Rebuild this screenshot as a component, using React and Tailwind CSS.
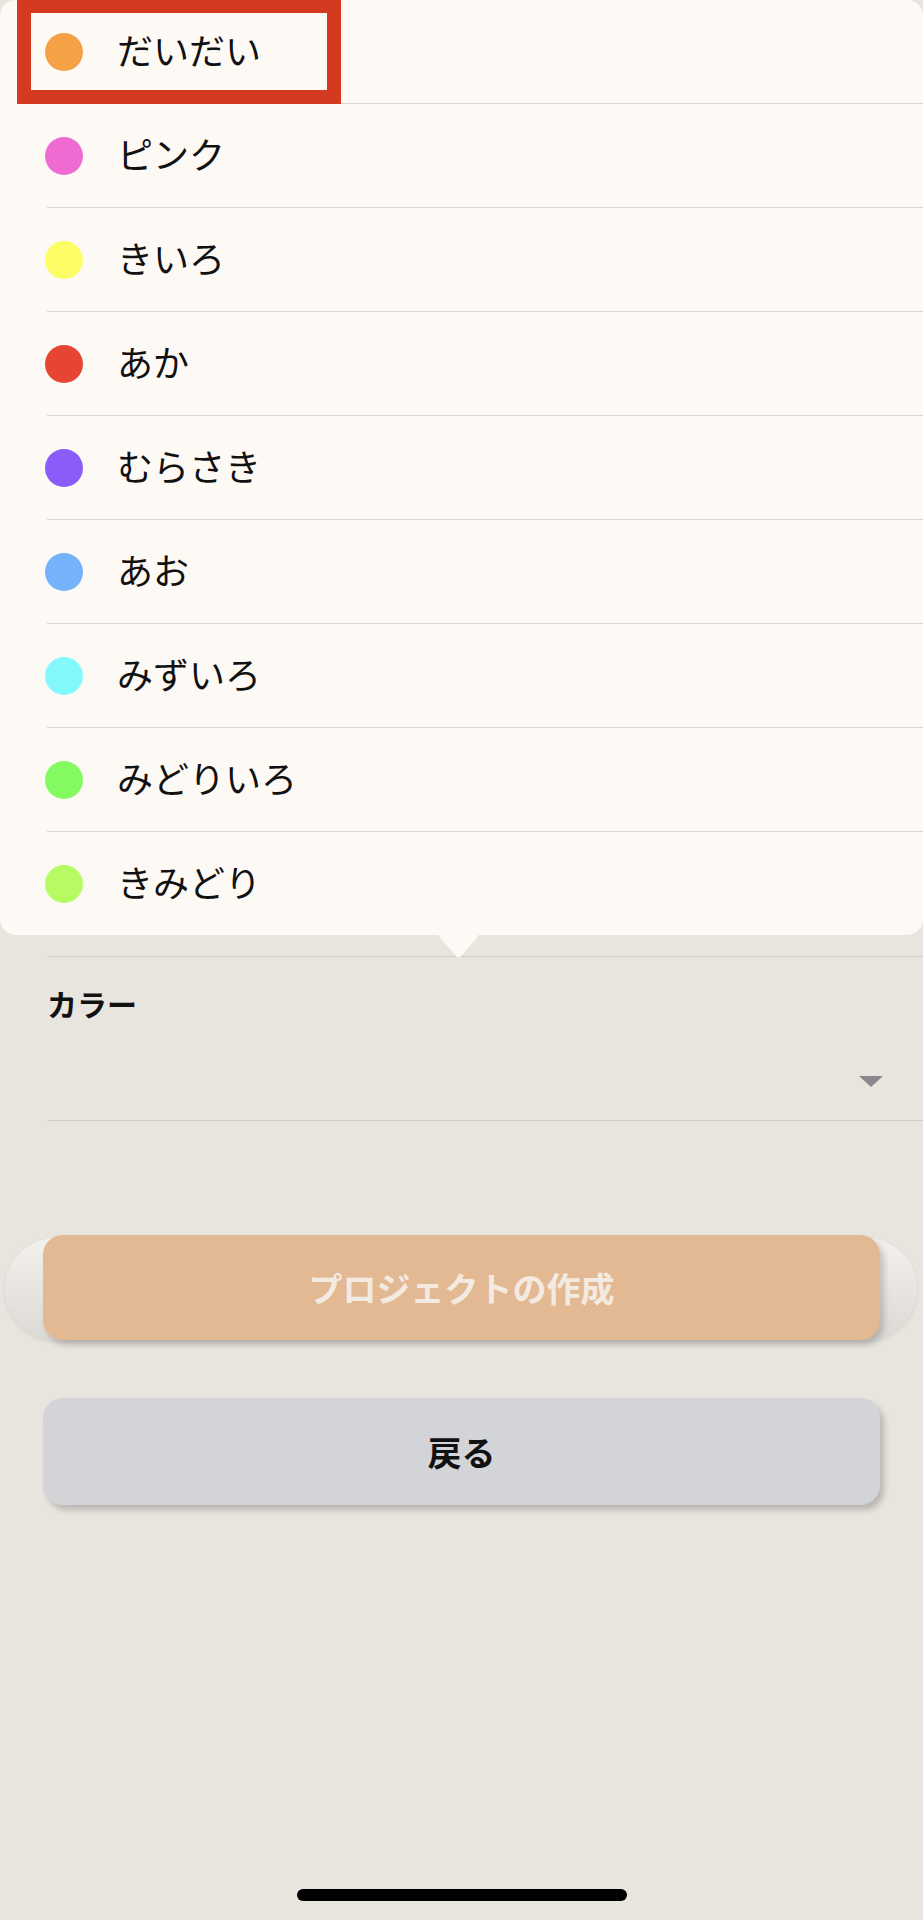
import React from "react";

const colors = [
  { name: "だいだい", c: "bg-[#f4a245]" },
  { name: "ピンク", c: "bg-[#f06bd1]" },
  { name: "きいろ", c: "bg-[#fdfe66]" },
  { name: "あか", c: "bg-[#e64533]" },
  { name: "むらさき", c: "bg-[#8b5cf9]" },
  { name: "あお", c: "bg-[#74b3fb]" },
  { name: "みずいろ", c: "bg-[#83f9fe]" },
  { name: "みどりいろ", c: "bg-[#83fb60]" },
  { name: "きみどり", c: "bg-[#b6fb63]" },
];

export default function App() {
  return (
    <div
      className="relative w-full h-[1920px] overflow-hidden bg-[#e8e4de] text-[#111]"
      style={{ fontFamily: '"Noto Sans CJK JP", "Noto Sans", sans-serif' }}
    >
      {/* underlying form */}
      <div className="pl-[47px]">
        <div className="h-[957px] border-b border-[#d0ccc7]" />
        <div className="pt-[29px] h-[65px]">
          <div className="text-[30px] leading-[34px] font-bold">カラー</div>
        </div>
        <div className="h-[99px] border-b border-[#d0ccc7] flex items-end justify-end pr-[40px] pb-[33px]">
          <svg width="24" height="11" viewBox="0 0 24 11">
            <path d="M0 0 H24 L12 11 Z" fill="#8e868e" />
          </svg>
        </div>
      </div>

      <div className="mt-[114px] relative px-[43px]">
        <div className="absolute left-[5px] right-[6px] top-[3px] h-[102px] rounded-full bg-gradient-to-b from-[#f3f1ef] to-[#dcd9d5] shadow-[0_2px_4px_rgba(0,0,0,0.08)]" />
        <button className="relative w-full h-[105px] rounded-[20px] bg-[#e3b994] shadow-[4px_5px_6px_rgba(0,0,0,0.18)] text-[34px] font-bold text-[#f3ebe2] flex items-center justify-center">
          プロジェクトの作成
        </button>
      </div>

      <div className="mt-[58px] px-[43px]">
        <button className="w-full h-[107px] rounded-[20px] bg-[#d3d4d8] shadow-[4px_5px_6px_rgba(0,0,0,0.2)] text-[34px] font-bold text-[#111] flex items-center justify-center">
          戻る
        </button>
      </div>

      <div className="mt-[384px] flex justify-center">
        <div className="w-[330px] h-[12px] rounded-full bg-black" />
      </div>

      {/* popover menu */}
      <div className="absolute top-0 left-0 right-0">
        <div className="bg-[#fdf9f4] rounded-[16px] h-[935px] overflow-hidden">
          {colors.map((item) => (
            <div
              key={item.name}
              className="ml-[47px] h-[104px] border-b border-[#d9d5d0] flex items-center gap-[34px]"
            >
              <div className={`-ml-[2px] w-[38px] h-[38px] rounded-full ${item.c}`} />
              <span className="text-[36px] leading-none -mt-[6px]">{item.name}</span>
            </div>
          ))}
        </div>
        <svg
          className="absolute left-[438px] top-[934px]"
          width="41"
          height="25"
          viewBox="0 0 41 25"
        >
          <path d="M0 0 H41 Q40 3 38 5 L23 22 Q20.5 25 18 22 L3 5 Q1 3 0 0 Z" fill="#fdf9f4" />
        </svg>
        <div className="absolute left-[17px] top-[-1px] w-[324px] h-[105px] border-[14px] border-[#d43a21]" />
      </div>
    </div>
  );
}
